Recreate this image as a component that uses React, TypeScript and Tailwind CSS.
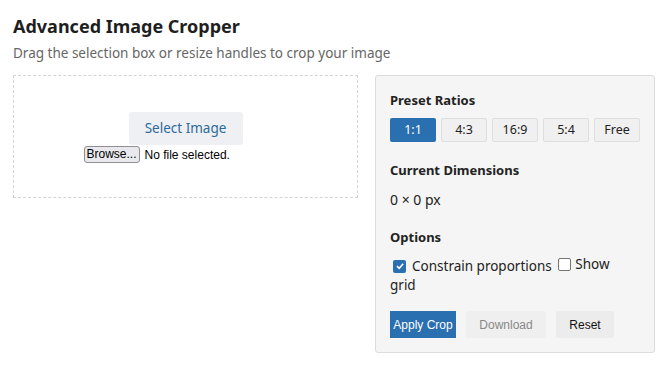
import React from "react";

export default function App() {
  const ratios = ["1:1", "4:3", "16:9", "5:4", "Free"];
  return (
    <div className="min-h-[377px] w-[667px] bg-white pl-[13px] pr-[12px] pt-[13px] text-[#222]" style={{ fontFamily: '"Noto Sans", "Open Sans", sans-serif' }}>
      <h1 className="text-[18px] font-bold leading-[26px] text-[#1f1f1f]">Advanced Image Cropper</h1>
      <p className="mt-[4px] text-[13.5px] leading-[20px] text-[#666]">Drag the selection box or resize handles to crop your image</p>
      <div className="mt-[12px] flex items-start gap-[17px]">
        <div className="flex h-[123px] w-[345px] shrink-0 flex-col items-center justify-center border border-dashed border-[#d4d4d4]">
          <div className="mt-[2px] flex h-[33px] w-[114px] items-center justify-center rounded-[3px] bg-[#eef0f3] text-[13.5px] text-[#2c6a99]">Select Image</div>
          <div className="mt-[1px] flex w-[204px] items-center gap-[5px] text-[12px] text-black" style={{ fontFamily: '"Liberation Sans", Arial, sans-serif' }}>
            <span className="rounded-[3px] border border-[#8f8f8f] bg-[#e9e9ed] px-[2px] leading-[15px]">Browse...</span>
            <span>No file selected.</span>
          </div>
        </div>
        <div className="w-[280px] shrink-0 rounded-[3px] border border-[#dcdcdc] bg-[#f5f5f5] px-[14px] pt-[15px] pb-[14px]">
          <h3 className="text-[13px] font-bold leading-[18px]">Preset Ratios</h3>
          <div className="mt-[9px] flex gap-[5px]">
            {ratios.map((r, i) => (
              <div
                key={r}
                className={
                  i === 0
                    ? "flex h-[24px] w-[46px] items-center justify-center rounded-[2px] bg-[#2a6fb0] text-[12.5px] text-white"
                    : "flex h-[24px] w-[46px] items-center justify-center rounded-[2px] border border-[#dedede] bg-[#f0f0f0] text-[12.5px] text-[#222]"
                }
              >
                {r}
              </div>
            ))}
          </div>
          <h3 className="mt-[19px] text-[13px] font-bold leading-[18px]">Current Dimensions</h3>
          <p className="mt-[11px] text-[14px] leading-[20px]">0 × 0 px</p>
          <h3 className="mt-[18px] text-[13px] font-bold leading-[18px]">Options</h3>
          <div className="mt-[9px] text-[13.5px] leading-[19px]">
            <label className="ml-[3px] inline-flex items-center">
              <span className="mr-[6px] inline-flex h-[13px] w-[13px] items-center justify-center rounded-[2px] bg-[#2a6fb0]">
                <svg width="10" height="10" viewBox="0 0 10 10"><path d="M2 5.2 L4.2 7.3 L8.2 2.8" stroke="white" strokeWidth="1.6" fill="none" /></svg>
              </span>
              Constrain proportions
            </label>{" "}
            <label className="inline-flex items-center">
              <span className="mr-[4px] ml-[3px] inline-block h-[13px] w-[13px] rounded-[2px] border border-[#767676] bg-white" />
              Show
            </label>
            <br />
            grid
          </div>
          <div className="mt-[16px] flex items-center gap-[10px] text-[12px]" style={{ fontFamily: '"Liberation Sans", Arial, sans-serif' }}>
            <div className="flex h-[27px] w-[66px] items-center justify-center bg-[#2a6fb0] text-white">Apply Crop</div>
            <div className="flex h-[27px] w-[80px] items-center justify-center rounded-[2px] bg-[#efefef] text-[#888]">Download</div>
            <div className="flex h-[27px] w-[58px] items-center justify-center rounded-[2px] bg-[#ececec] text-[#111]">Reset</div>
          </div>
        </div>
      </div>
    </div>
  );
}
